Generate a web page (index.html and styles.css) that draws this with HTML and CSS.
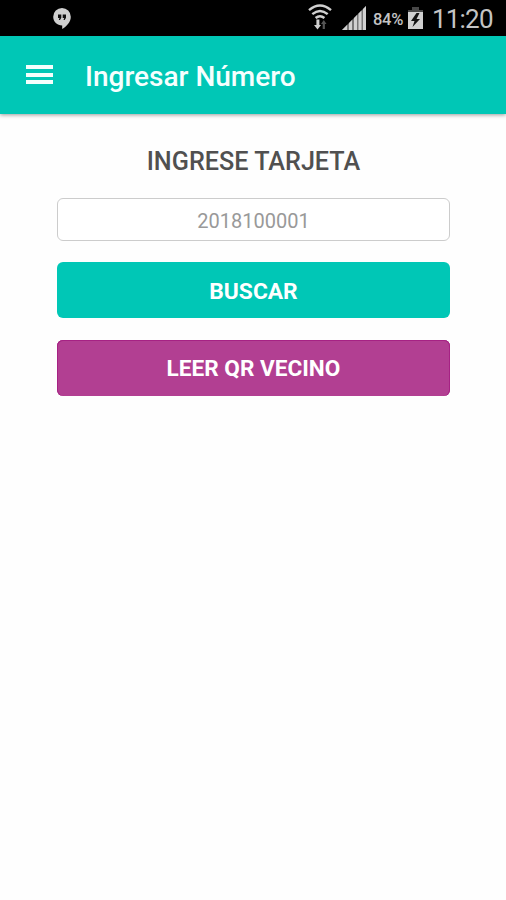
FILE: index.html
```
<!DOCTYPE html>
<html lang="es">
<head>
    <meta charset="UTF-8">
    <title>Ingresar Número</title>
    <link rel="stylesheet" href="styles.css">
</head>
<body>
<div class="status">
    <svg class="hangouts" width="18" height="21" viewBox="0 0 18 21">
        <path d="M9 0a8.8 8.8 0 0 0-8.8 8.8c0 5 4 8.700 9 8.700V21c4.500-2.500 8.600-7 8.600-12.200A8.800 8.800 0 0 0 9 0z" fill="#d0d0d0"/>
        <path d="M5 6.500h3.300v3.200L7 12H5.800l.7-2H5zM9.700 6.500H13v3.200L11.700 12h-1.200l.7-2H9.700z" fill="#111"/>
    </svg>
    <div class="info">
        <svg class="wifi" width="24" height="27" viewBox="0 0 24 27">
            <g fill="none" stroke="#d0d0d0" stroke-width="2.400">
                <path d="M1 6.200q11-9.400 22 0"/>
                <path d="M4.300 10.200q7.700-6.600 15.400 0"/>
                <path d="M7.600 14q4.400-3.700 8.800 0"/>
            </g>
            <path d="M8.400 15.500h3V21H13l-3.500 4.500L6 21h2.400z" fill="#d0d0d0"/>
            <path d="M14.700 25v-5H13l2.800-4 2.700 4h-1.600v5z" fill="#555"/>
        </svg>
        <svg class="signal" width="24" height="24" viewBox="0 0 24 24">
            <path d="M0 24L24 0v24z" fill="#777"/>
            <path d="M0 24l5-5v5zM7 24v-7l3-3v10zM12 24V12l3-3v15zM16.500 24V7.500l3-3V24zM21 24V3l3-3v24z" fill="#d0d0d0"/>
        </svg>
        <span class="percent">84%</span>
        <svg class="battery" width="15" height="22" viewBox="0 0 15 22">
            <path d="M4 0h7v3h4v5H0V3h4z" fill="#484848"/>
            <path d="M0 5h15v17H0z" fill="#d0d0d0"/>
            <path d="M8.500 6L3 14h3.500L4.500 20l7.500-8H8.500l3-6z" fill="#111"/>
        </svg>
        <span class="clock">11:20</span>
    </div>
</div>
<div class="toolbar">
    <div class="menu">
        <span></span>
        <span></span>
        <span></span>
    </div>
    <h1>Ingresar Número</h1>
</div>
<div class="content">
    <h2>INGRESE TARJETA</h2>
    <input class="card" type="text" placeholder="2018100001">
    <button class="btn search">BUSCAR</button>
    <button class="btn qr">LEER QR VECINO</button>
</div>
</body>
</html>
```
FILE: styles.css
```
*{
    box-sizing: border-box;
}
body{
    margin: 0;
    min-height: 900px;
    background: #fefefe;
    font-family: Roboto, sans-serif;
}
.status{
    height: 36px;
    background: #000;
    color: #c4c4c4;
    display: flex;
    justify-content: space-between;
    align-items: flex-start;
    padding: 0 12px 0 53px;
}
.status svg{
    display: block;
}
.hangouts{
    margin-top: 8px;
}
.info{
    display: flex;
    align-items: flex-start;
}
.wifi{
    margin: 4px 10px 0 0;
}
.signal{
    margin: 6px 7px 0 0;
}
.percent{
    width: 32px;
    margin: 10px 3px 0 0;
    font-size: 16.5px;
    font-weight: 500;
    letter-spacing: -.3px;
    line-height: 20px;
    white-space: nowrap;
}
.battery{
    margin: 7px 10px 0 0;
}
.clock{
    font-size: 26px;
    letter-spacing: -.8px;
    line-height: 30px;
    margin-top: 4px;
    margin-left: -1px;
    width: 62px;
    white-space: nowrap;
}
.toolbar{
    height: 78px;
    background: #00c7b6;
    box-shadow: 0 1px 4px rgba(0,0,0,.4);
    display: flex;
    align-items: center;
    padding: 0 26px;
}
.menu{
    width: 27px;
    display: flex;
    flex-direction: column;
    gap: 3.5px;
    margin-bottom: 1px;
}
.menu span{
    height: 4px;
    background: #f4fffd;
}
.toolbar h1{
    margin: 3px 0 0 32px;
    color: #f6fffe;
    font-size: 28px;
    font-weight: 500;
    white-space: nowrap;
}
.content{
    padding: 33px 56px 0 57px;
    text-align: center;
}
.content h2{
    margin: 0 0 21px;
    color: #505050;
    font-size: 25.2px;
    line-height: 30px;
    font-weight: 500;
}
.card{
    display: block;
    width: 100%;
    height: 43px;
    padding: 2px 0 0;
    border: 1px solid #ccc;
    border-radius: 6px;
    background: #fff;
    font-family: inherit;
    font-size: 20px;
    text-align: center;
}
.card::placeholder{
    color: #999;
}
.btn{
    display: block;
    width: 100%;
    height: 56px;
    margin-top: 21px;
    padding: 2px 0 0;
    border: 0;
    border-radius: 6px;
    color: #fff;
    font-family: inherit;
    font-size: 22.8px;
    font-weight: 700;
}
.search{
    background: #00c7b6;
}
.qr{
    margin-top: 22px;
    padding: 0;
    font-size: 22.6px;
    background: #b23f92;
    box-shadow: inset 0 1px 0 #a62284, inset 1px 0 0 #a62284, inset -1px 0 0 #a62284;
}
```
